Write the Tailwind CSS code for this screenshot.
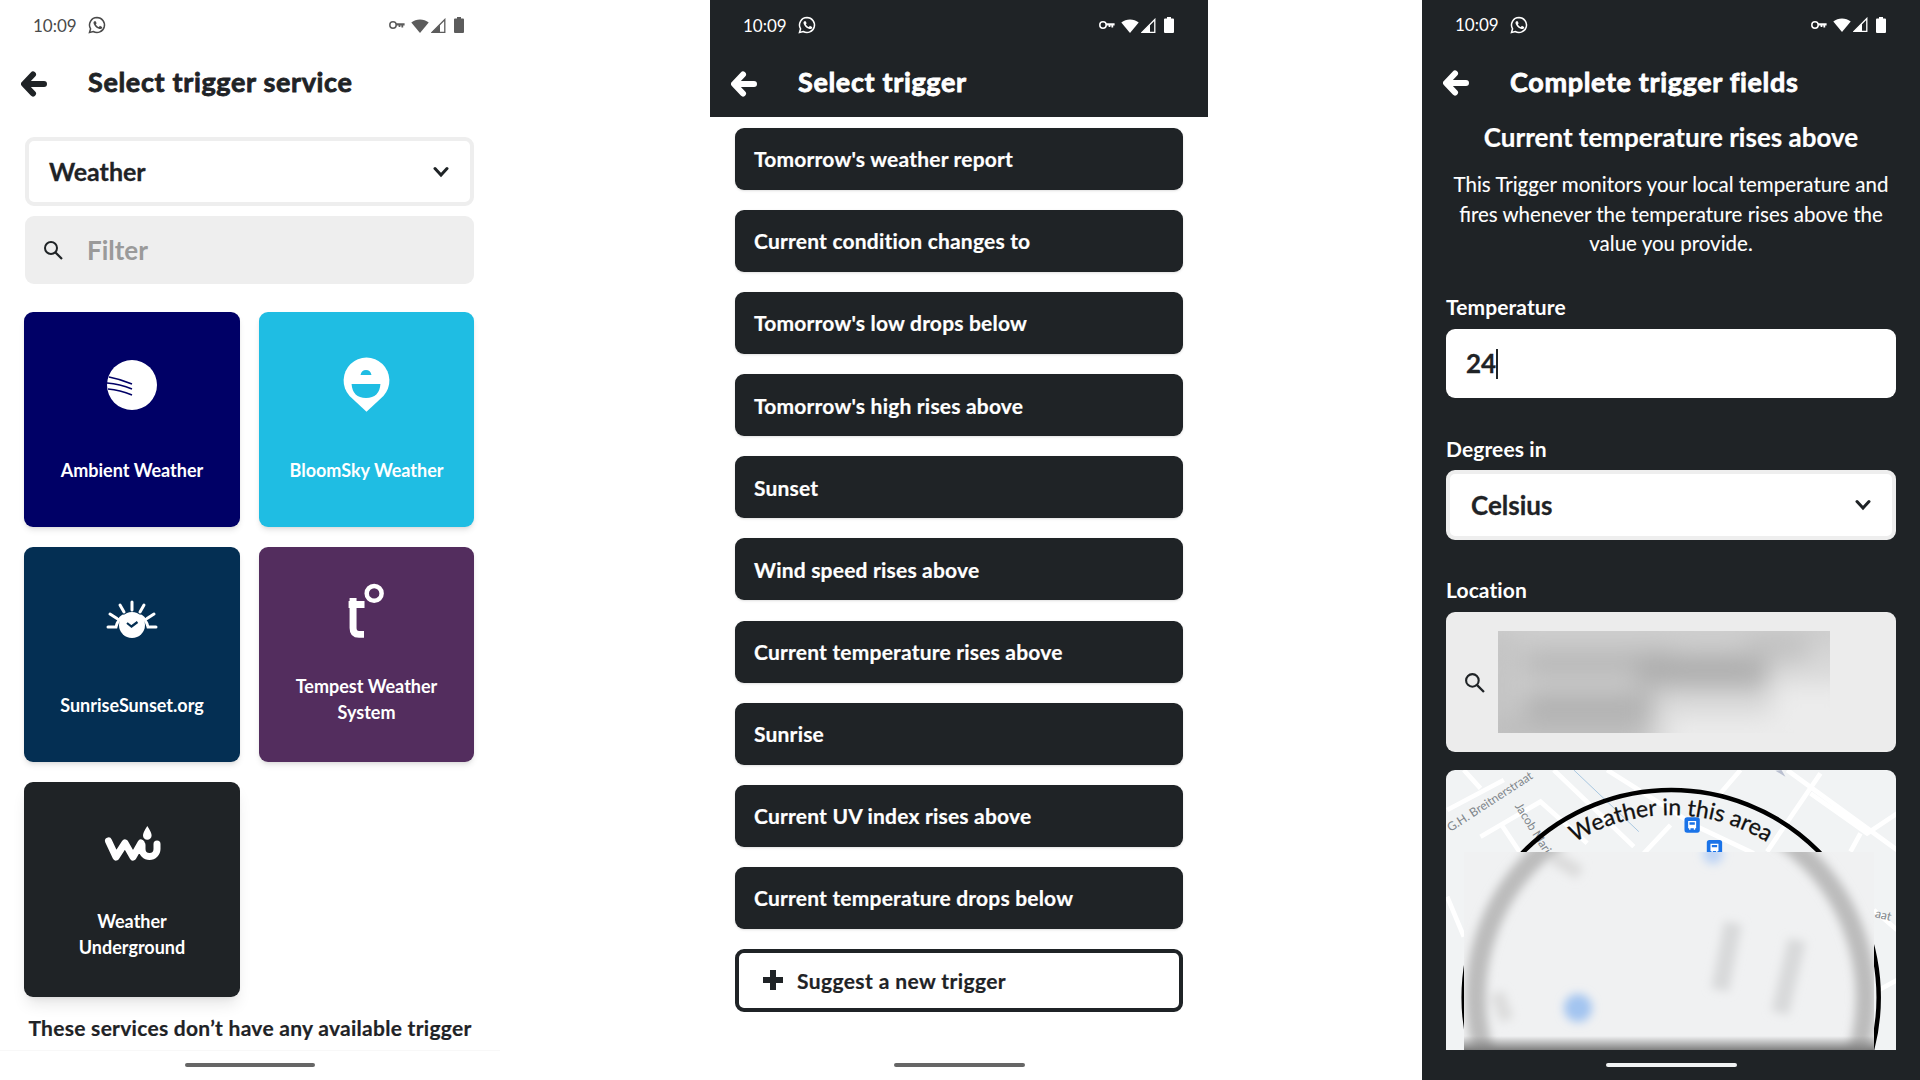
<!DOCTYPE html>
<html lang="en">
<head>
    <meta charset="UTF-8">
    <title>IFTTT trigger screens</title>
    <script src="https://cdn.jsdelivr.net/npm/@tailwindcss/browser@4"></script>
</head>
<body class="bg-white font-[Lato,sans-serif] text-[#1f2326] overflow-hidden">
    <!-- shared icons -->
    <svg class="hidden">
        <symbol id="whatsapp" viewBox="0 0 24 24">
            <path d="M12 3a9 9 0 0 0-7.7 13.6L3 21l4.5-1.2A9 9 0 1 0 12 3z" fill="none" stroke="currentColor" stroke-width="1.8"/>
            <path fill="currentColor" d="M9 7.5c-.5 0-1.2.6-1.2 1.9 0 1.3.9 2.6 1.1 2.8.2.2 1.8 2.9 4.4 3.9 2.2.9 2.6.7 3.1.6.5 0 1.5-.6 1.7-1.2.2-.6.2-1.1.1-1.2-.1-.1-.2-.2-.5-.3l-1.8-.9c-.2-.1-.4-.1-.6.1l-.8 1c-.1.2-.3.2-.5.1-.9-.4-2.3-1.2-3.3-3-.1-.2 0-.4.1-.5l.6-.7c.1-.2.1-.3 0-.5l-.8-1.9c-.2-.4-.4-.2-.6-.2z"/>
        </symbol>
        <symbol id="key" viewBox="0 0 16 10">
            <circle cx="4" cy="5" r="3.200" fill="none" stroke="currentColor" stroke-width="1.500"/>
            <path fill="currentColor" d="M7 3.200h8.600v2.400h-1.400v2h-1.800v-2h-1v1.400H9.600V5.600H7z"/>
        </symbol>
        <symbol id="wifi" viewBox="0 0 18 15">
            <path fill="currentColor" d="M9 15 .3 4.600a13.500 13.500 0 0 1 17.400 0z"/>
        </symbol>
        <symbol id="signal" viewBox="0 0 15 15">
            <path fill="none" stroke="currentColor" stroke-width="1.300" d="M13.800 1.500v12.800H1.200z"/>
            <path fill="currentColor" d="M9 6.500v8H1z"/>
        </symbol>
        <symbol id="battery" viewBox="0 0 10 16">
            <path fill="currentColor" d="M3 0h4v1.400h2a1 1 0 0 1 1 1V15a1 1 0 0 1-1 1H1a1 1 0 0 1-1-1V2.400a1 1 0 0 1 1-1h2z"/>
        </symbol>
        <symbol id="back" viewBox="0 0 26 26">
            <path fill="none" stroke="currentColor" stroke-width="6" stroke-linejoin="round" stroke-linecap="round" d="M12 3.500 3 13l9 9.500M4 13h19"/>
        </symbol>
        <symbol id="search" viewBox="0 0 20 20">
            <circle cx="8" cy="8" r="6" fill="none" stroke="currentColor" stroke-width="2"/>
            <path stroke="currentColor" stroke-width="2.200" d="m12.500 12.500 6.500 6.500"/>
        </symbol>
        <symbol id="chevron" viewBox="0 0 16 12">
            <path fill="none" stroke="currentColor" stroke-width="3" stroke-linecap="round" d="m2 2.500 6 6.500 6-6.500"/>
        </symbol>
    </svg>

    <div class="flex h-[1080px] w-[1920px]">
        <!-- Select trigger service -->
        <section class="w-[500px] h-full flex flex-col relative">
            <div class="h-[50px] flex items-center pl-[33px] pr-[36px] text-[#4a4a4a]">
                <span class="text-[17px] leading-none w-[54px]">10:09</span>
                <svg class="w-[20px] h-[20px]"><use href="#whatsapp"/></svg>
                <div class="ml-auto flex items-center text-[#5c5c5c]">
                    <svg class="w-[16px] h-[10px]"><use href="#key"/></svg>
                    <svg class="w-[18px] h-[15px] ml-[6px]"><use href="#wifi"/></svg>
                    <svg class="w-[15px] h-[15px] ml-[2px]"><use href="#signal"/></svg>
                    <svg class="w-[10px] h-[16px] ml-[8px]"><use href="#battery"/></svg>
                </div>
            </div>
            <div class="h-[67px] flex items-center pl-[21px]">
                <svg class="w-[26px] h-[26px]"><use href="#back"/></svg>
                <h1 class="ml-[41px] pb-[2px] text-[27px] font-bold tracking-[0.65px] [-webkit-text-stroke:0.8px]">Select trigger service</h1>
            </div>
            <div class="ml-[25px] mr-[26px] mt-[20px] h-[69px] rounded-[9px] border-[4px] border-[#eeeeee] flex items-center pl-[20px] pr-[21px]">
                <span class="text-[25px] font-bold [-webkit-text-stroke:0.3px]">Weather</span>
                <svg class="w-[16px] h-[12px] ml-auto"><use href="#chevron"/></svg>
            </div>
            <div class="ml-[25px] mr-[26px] mt-[10px] h-[68px] rounded-[9px] bg-[#eeeeee] flex items-center pl-[18px]">
                <svg class="w-[20px] h-[20px]"><use href="#search"/></svg>
                <span class="ml-[24px] text-[26px] font-bold text-[#9a9a9a]">Filter</span>
            </div>
            <div class="ml-[24px] mt-[28px] grid grid-cols-[216px_215px] gap-x-[19px] gap-y-[20px] text-white text-[18px] font-bold leading-[26px] text-center">
                <div class="h-[215px] rounded-[9px] shadow-md bg-[#000066]">
                    <svg class="w-full h-[126px]" viewBox="0 0 216 126">
                        <circle cx="108" cy="73" r="25" fill="#fff"/>
                        <path fill="none" stroke="#000066" stroke-width="1.500" d="M85 65q11 2 23 7M83 71q13 1 25 6M84 77q12 1 24 6"/>
                    </svg>
                    <p class="mt-[19px]">Ambient Weather</p>
                </div>
                <div class="h-[215px] rounded-[9px] shadow-md bg-[#1fbde3]">
                    <svg class="w-full h-[126px]" viewBox="0 0 216 126">
                        <path fill="#fff" d="M108 100 91 84a23 23 0 1 1 34 0z"/>
                        <path fill="#1fbde3" d="M93 72h29q-1 14-14.500 14T93 72zM102 63q1-5 5.500-5t5.500 5z"/>
                    </svg>
                    <p class="mt-[19px]">BloomSky Weather</p>
                </div>
                <div class="h-[215px] rounded-[9px] shadow-md bg-[#042f53]">
                    <svg class="w-full h-[126px]" viewBox="0 0 216 126">
                        <g fill="none" stroke="#fff" stroke-width="3" stroke-linecap="round">
                            <path d="M108 55v8M96 58l4 7M120 58l-4 7M86 67l7 4.500M130 67l-7 4.500M84 80h8q2-8 7-11M132 80h-8q-2-8-7-11"/>
                        </g>
                        <circle cx="108" cy="78" r="13" fill="#fff"/>
                        <path fill="none" stroke="#042f53" stroke-width="2.200" d="m103 76 4.500 3.500 6-4.500"/>
                    </svg>
                    <p class="mt-[19px]">SunriseSunset.org</p>
                </div>
                <div class="h-[215px] rounded-[9px] shadow-md bg-[#532d5e]">
                    <svg class="w-full h-[126px]" viewBox="0 0 216 126">
                        <path fill="none" stroke="#fff" stroke-width="7" stroke-linejoin="round" d="M94.500 51v30q0 6.500 6 6.500h5M90 57.500h16"/>
                        <circle cx="115.700" cy="46.300" r="7.500" fill="none" stroke="#fff" stroke-width="4.500"/>
                    </svg>
                    <p>Tempest Weather<br>System</p>
                </div>
                <div class="h-[215px] rounded-[9px] shadow-lg bg-[#1f2326]">
                    <svg class="w-full h-[126px]" viewBox="0 0 216 126">
                        <g fill="none" stroke="#fff" stroke-width="7" stroke-linecap="round" stroke-linejoin="round">
                            <path d="m84.500 59 7.500 16 9-14 8 14 8-14M118 63v4a7.500 7.500 0 0 0 15 0v-5"/>
                        </g>
                        <path fill="#fff" d="M123.300 44q-4.300 6.500-4.300 9.500a4.300 4.300 0 0 0 8.600 0q0-3-4.300-9.500z"/>
                    </svg>
                    <p>Weather<br>Underground</p>
                </div>
            </div>
            <p class="mt-[18px] text-center text-[21px] leading-[26px] font-bold tracking-[0.28px] [-webkit-text-stroke:0.2px]">These services don&#8217;t have any available trigger</p>
            <div class="mt-auto h-[30px] border-t border-[#f8f8f8] flex justify-center pt-[12px]">
                <div class="w-[130px] h-[4px] rounded-full bg-[#666666]"></div>
            </div>
        </section>

        <!-- Select trigger -->
        <section class="w-[498px] h-full ml-[210px] flex flex-col">
            <header class="h-[117px] bg-[#1f2326] text-white">
                <div class="h-[50px] flex items-center pl-[33px] pr-[34px]">
                    <span class="text-[17px] leading-none w-[54px]">10:09</span>
                    <svg class="w-[20px] h-[20px]"><use href="#whatsapp"/></svg>
                    <div class="ml-auto flex items-center">
                        <svg class="w-[16px] h-[10px]"><use href="#key"/></svg>
                        <svg class="w-[18px] h-[15px] ml-[6px]"><use href="#wifi"/></svg>
                        <svg class="w-[15px] h-[15px] ml-[2px]"><use href="#signal"/></svg>
                        <svg class="w-[10px] h-[16px] ml-[8px]"><use href="#battery"/></svg>
                    </div>
                </div>
                <div class="h-[67px] flex items-center pl-[21px]">
                    <svg class="w-[26px] h-[26px]"><use href="#back"/></svg>
                    <h1 class="ml-[41px] pb-[2px] text-[27px] font-bold tracking-[0.65px] [-webkit-text-stroke:0.8px]">Select trigger</h1>
                </div>
            </header>
            <div class="mx-[25px] mt-[11px] flex flex-col gap-[20.100px] text-white text-[21px] font-bold tracking-[0.2px] [-webkit-text-stroke:0.2px]">
                <div class="h-[62px] rounded-[9px] bg-[#1f2326] shadow-sm flex items-center pl-[19px]">Tomorrow's weather report</div>
                <div class="h-[62px] rounded-[9px] bg-[#1f2326] shadow-sm flex items-center pl-[19px]">Current condition changes to</div>
                <div class="h-[62px] rounded-[9px] bg-[#1f2326] shadow-sm flex items-center pl-[19px]">Tomorrow's low drops below</div>
                <div class="h-[62px] rounded-[9px] bg-[#1f2326] shadow-sm flex items-center pl-[19px]">Tomorrow's high rises above</div>
                <div class="h-[62px] rounded-[9px] bg-[#1f2326] shadow-sm flex items-center pl-[19px]">Sunset</div>
                <div class="h-[62px] rounded-[9px] bg-[#1f2326] shadow-sm flex items-center pl-[19px]">Wind speed rises above</div>
                <div class="h-[62px] rounded-[9px] bg-[#1f2326] shadow-sm flex items-center pl-[19px]">Current temperature rises above</div>
                <div class="h-[62px] rounded-[9px] bg-[#1f2326] shadow-sm flex items-center pl-[19px]">Sunrise</div>
                <div class="h-[62px] rounded-[9px] bg-[#1f2326] shadow-sm flex items-center pl-[19px]">Current UV index rises above</div>
                <div class="h-[62px] rounded-[9px] bg-[#1f2326] shadow-sm flex items-center pl-[19px]">Current temperature drops below</div>
                <div class="h-[63px] rounded-[9px] bg-white border-[4px] border-[#1f2326] text-[#1f2326] flex items-center pl-[24px]">
                    <svg class="w-[20px] h-[20px]" viewBox="0 0 20 20"><path fill="currentColor" d="M7 0h6v7h7v6h-7v7H7v-7H0V7h7z"/></svg>
                    <span class="ml-[14px] tracking-[0.4px]">Suggest a new trigger</span>
                </div>
            </div>
            <div class="mt-auto h-[30px] flex justify-center pt-[13px]">
                <div class="w-[131px] h-[4px] rounded-full bg-[#666666]"></div>
            </div>
        </section>

        <!-- Complete trigger fields -->
        <section class="w-[498px] h-full ml-[214px] bg-[#1f2326] text-white flex flex-col">
            <div class="h-[50px] flex items-center pl-[33px] pr-[34px]">
                <span class="text-[17px] leading-none w-[54px]">10:09</span>
                <svg class="w-[20px] h-[20px]"><use href="#whatsapp"/></svg>
                <div class="ml-auto flex items-center">
                    <svg class="w-[16px] h-[10px]"><use href="#key"/></svg>
                    <svg class="w-[18px] h-[15px] ml-[6px]"><use href="#wifi"/></svg>
                    <svg class="w-[15px] h-[15px] ml-[2px]"><use href="#signal"/></svg>
                    <svg class="w-[10px] h-[16px] ml-[8px]"><use href="#battery"/></svg>
                </div>
            </div>
            <div class="h-[67px] flex items-center pl-[21px]">
                <svg class="w-[26px] h-[26px]"><use href="#back"/></svg>
                <h1 class="ml-[41px] pb-[2px] text-[27px] font-bold tracking-[0.65px] [-webkit-text-stroke:0.8px]">Complete trigger fields</h1>
            </div>
            <h2 class="mt-[5px] text-center text-[26px] leading-[32px] font-bold [-webkit-text-stroke:0.2px]">Current temperature rises above</h2>
            <p class="mt-[17px] text-center text-[20.500px] leading-[29.300px] [-webkit-text-stroke:0.1px]">This Trigger monitors your local temperature and<br>fires whenever the temperature rises above the<br>value you provide.</p>
            <div class="mx-[24px] mt-[35px]">
                <label class="block text-[21px] leading-[28px] font-bold tracking-[0.1px]">Temperature</label>
                <div class="mt-[8px] h-[69px] rounded-[9px] bg-white text-[#1f2326] flex items-center pl-[20px] text-[26px] font-bold [-webkit-text-stroke:0.3px]">
                    24<span class="w-[2px] h-[30px] bg-[#1f2326]"></span>
                </div>
                <label class="block mt-[37px] text-[21px] leading-[28px] font-bold tracking-[0.1px]">Degrees in</label>
                <div class="mt-[7px] h-[70px] rounded-[9px] bg-white border-[4px] border-[#eeeeee] text-[#1f2326] flex items-center pl-[21px] pr-[21px]">
                    <span class="text-[26px] font-bold [-webkit-text-stroke:0.3px]">Celsius</span>
                    <svg class="w-[16px] h-[12px] ml-auto"><use href="#chevron"/></svg>
                </div>
                <label class="block mt-[36px] text-[21px] leading-[28px] font-bold tracking-[0.1px]">Location</label>
                <div class="mt-[8px] h-[140px] rounded-[9px] bg-[#ececec] text-[#1f2326] relative flex items-center pl-[18px]">
                    <svg class="w-[21px] h-[21px]"><use href="#search"/></svg>
                    <!-- blurred address -->
                    <div class="absolute left-[52px] top-[19px] w-[332px] h-[102px] overflow-hidden">
                        <svg class="w-full h-full" viewBox="0 0 332 102">
                            <defs><filter id="soft" x="-20%" y="-20%" width="140%" height="140%"><feGaussianBlur stdDeviation="12"/></filter></defs>
                            <rect width="332" height="102" fill="#d8d8d8"/>
                            <g filter="url(#soft)">
                                <rect x="-20" y="-20" width="380" height="36" fill="#cdcdcd"/>
                                <rect x="-20" y="0" width="40" height="120" fill="#c4c4c4"/>
                                <rect x="25" y="18" width="150" height="30" fill="#b8b8b8"/>
                                <rect x="140" y="22" width="130" height="34" fill="#adadad"/>
                                <rect x="250" y="5" width="60" height="24" fill="#c0c0c0"/>
                                <rect x="25" y="60" width="130" height="30" fill="#b0b0b0"/>
                                <rect x="-20" y="88" width="170" height="30" fill="#bdbdbd"/>
                                <rect x="170" y="84" width="200" height="40" fill="#ececec"/>
                                <rect x="275" y="52" width="80" height="40" fill="#ececec"/>
                            </g>
                        </svg>
                    </div>
                </div>
                <!-- map preview -->
                <div class="mt-[18px] h-[280px] rounded-t-[9px] bg-[#f1f3f4] relative overflow-hidden">
                    <svg class="w-full h-full" viewBox="0 0 449 280">
                        <defs><path id="arc" d="M42 227.500a182.500 182.500 0 0 1 365 0"/></defs>
                        <g transform="scale(.3333) translate(-78,-60)" fill="none" stroke="#fff" stroke-width="14">
                            <path d="M80 180 250 90M130 60l50 55M180 260l180-105 140 125M240 220l60 90M400 60l240 230M560 60l270 170 170 80M670 310l80-85M900 130l60-70M1040 305l160-235M1170 130l170 120 90-60M1100 60l330 240M1290 305l30-55M80 440l50 120M1360 480l70 60M1375 720l55-30"/>
                            <path d="M460 60l195 185" stroke="#a8c7e0" stroke-width="3"/>
                            <g stroke="none">
                                <rect x="792" y="202" width="46" height="46" rx="8" fill="#1a73e8"/>
                                <rect x="859" y="270" width="46" height="46" rx="8" fill="#1a73e8"/>
                                <path fill="#fff" d="M803 213h24v22h-3v4h-4v-4h-10v4h-4v-4h-3zM870 281h24v22h-3v4h-4v-4h-10v4h-4v-4h-3z"/>
                                <path fill="#1a73e8" d="M807 217h16v7h-16zM874 285h16v7h-16z"/>
                                <path d="M1065 62l30 18-12-20z" fill="#b9bfd0"/>
                            </g>
                        </g>
                        <g fill="#80868b" font-size="12">
                            <text transform="translate(4 62) rotate(-33)">G.H. Breitnerstraat</text>
                            <text transform="translate(68 36) rotate(58)">Jacob Maris</text>
                            <text transform="translate(428 147) rotate(14)">aat</text>
                        </g>
                        <circle cx="224.700" cy="227.500" r="207.500" fill="none" stroke="#000" stroke-width="4.500"/>
                        <text fill="#111" font-size="23" text-anchor="middle" stroke="#111" stroke-width="0.300"><textPath href="#arc" startOffset="50%">Weather in this area</textPath></text>
                    </svg>
                    <!-- blurred map -->
                    <div class="absolute left-[18px] top-[82px] w-[410px] h-[198px] overflow-hidden bg-[#f0f1f2]">
                        <svg class="w-full h-full" viewBox="0 0 410 198">
                            <defs><filter id="softer" x="-20%" y="-20%" width="140%" height="140%"><feGaussianBlur stdDeviation="5"/></filter></defs>
                            <g filter="url(#softer)" fill="none">
                                <circle cx="206.700" cy="145.500" r="195" stroke="#bcbcbc" stroke-width="20"/>
                                <path d="M269 71l-13 67M333 88l-17 73" stroke="#d8d9da" stroke-width="18"/>
                                <path d="M33 141l10 27M89 5l27 16" stroke="#dcdcdc" stroke-width="14"/>
                                <circle cx="114" cy="156" r="14" fill="#a3c4f0"/>
                                <circle cx="249" cy="2" r="10" fill="#bcd3f5"/>
                            </g>
                        </svg>
                        <div class="absolute inset-x-0 bottom-0 h-[14px] bg-linear-to-b from-transparent to-[#808080]"></div>
                    </div>
                </div>
            </div>
            <div class="mt-auto h-[30px] flex justify-center pt-[13px]">
                <div class="w-[131px] h-[4px] rounded-full bg-[#f1f3f4]"></div>
            </div>
        </section>
    </div>
</body>
</html>
